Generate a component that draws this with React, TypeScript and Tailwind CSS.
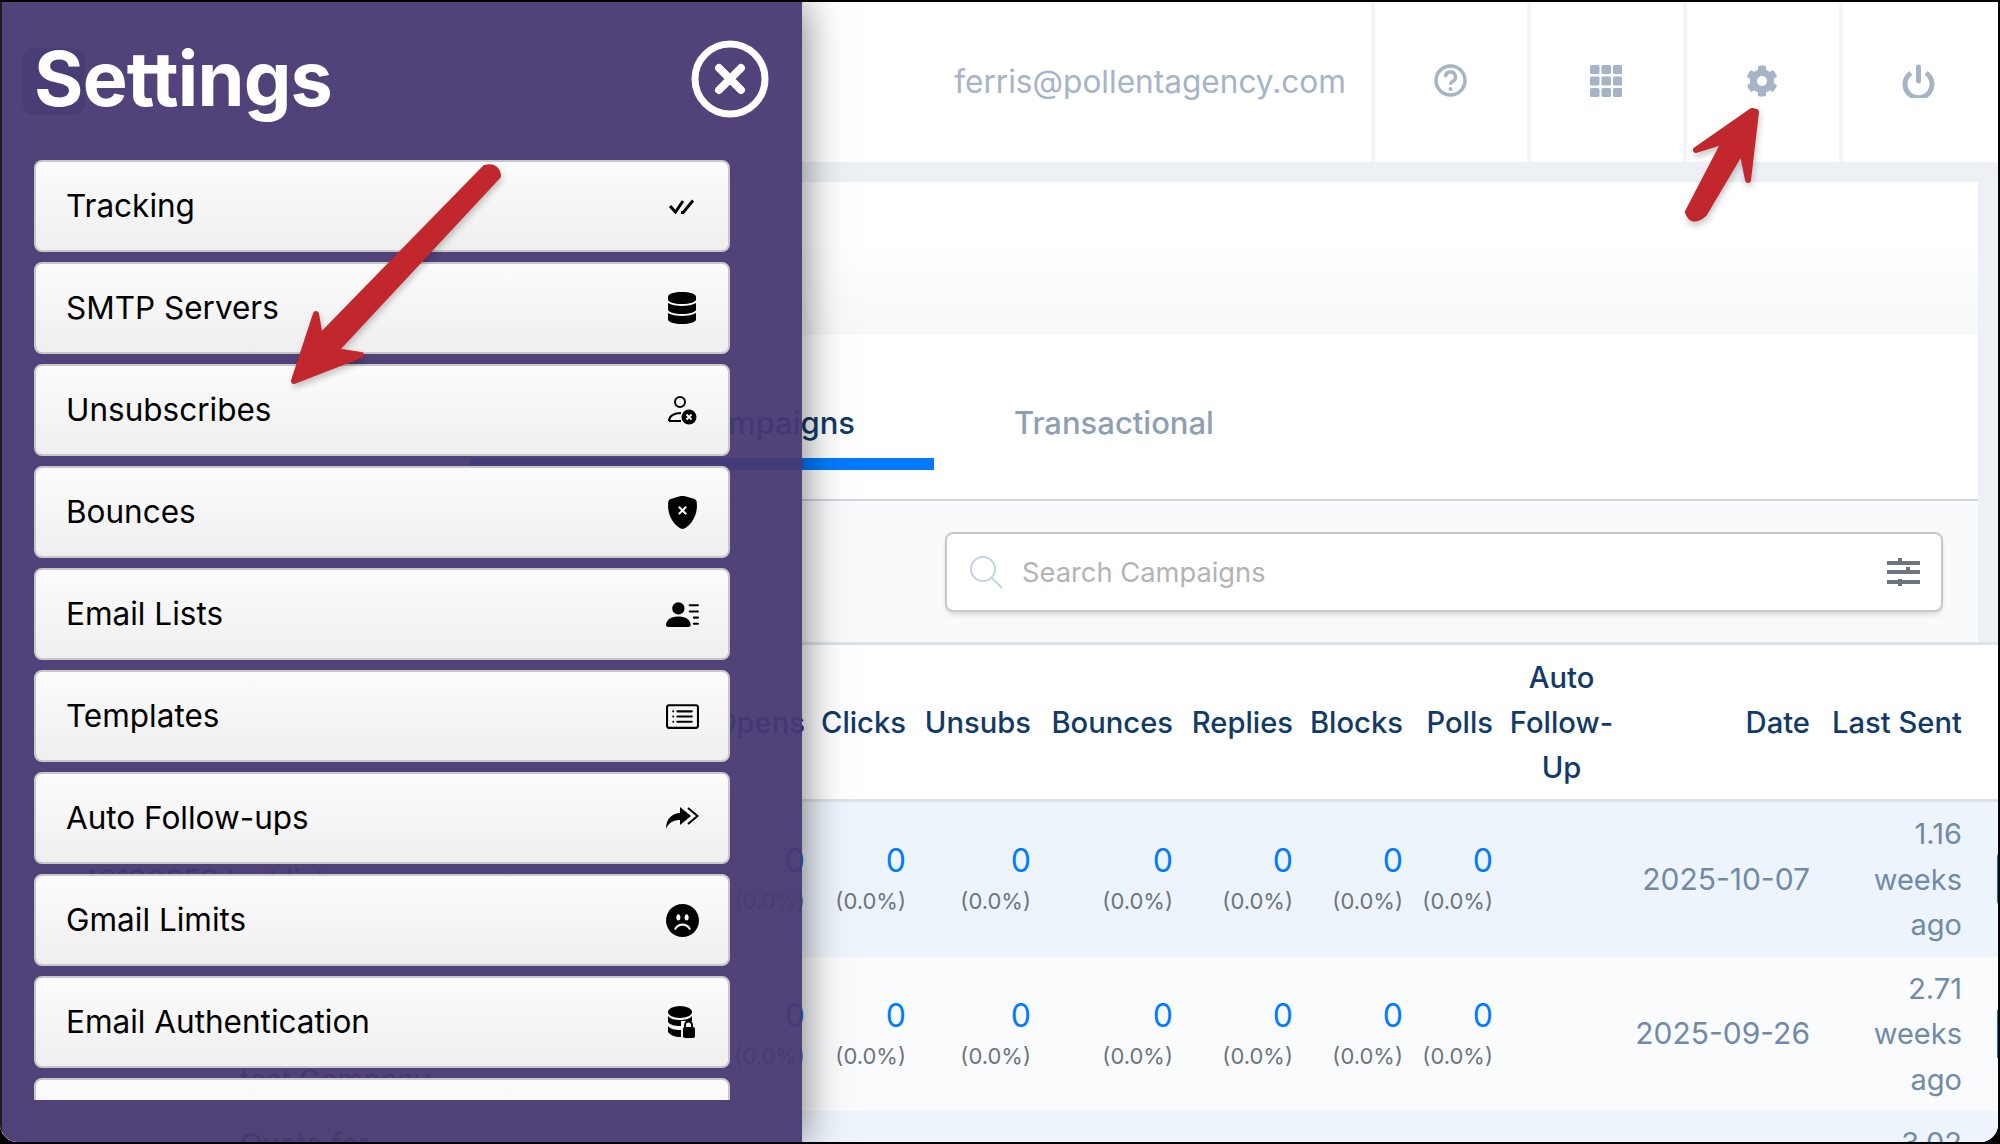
import { BsCardList, BsEmojiFrownFill, BsPersonLinesFill, BsShieldFillX } from "react-icons/bs";
import { FaCog, FaDatabase } from "react-icons/fa";

const font = { fontFamily: "Inter, sans-serif" };

const CheckDouble = () => (
  <svg width="26" height="15" viewBox="0 0 26 15" fill="none" stroke="#000" strokeWidth="3">
    <path d="M1 7l5.500 6L14 2" />
    <path d="M12 13.500l2 .2L24 1.500" />
  </svg>
);

const UserX = () => (
  <svg width="30" height="29" viewBox="0 0 30 29" fill="none">
    <circle cx="13" cy="6" r="5" stroke="#000" strokeWidth="2" />
    <path d="M2 25c0-5 5-8 12-8M2 25h12" stroke="#000" strokeWidth="2" />
    <circle cx="22" cy="21" r="7.500" fill="#000" />
    <path d="M19.500 18.500l5 5M24.500 18.500l-5 5" stroke="#fff" strokeWidth="1.800" />
  </svg>
);

const Forward = () => (
  <svg width="33" height="22" viewBox="0 0 33 22" fill="#000">
    <path d="M0 22C0 11 7 6 14 6V0l11 9-11 9v-5C8 13 3 15 0 22z" />
    <path d="M22 1l9.500 8L22 17" fill="none" stroke="#000" strokeWidth="2" />
  </svg>
);

const DatabaseLock = () => (
  <svg width="28" height="32" viewBox="0 0 28 32" fill="#000">
    <ellipse cx="12" cy="6" rx="12" ry="6" />
    <path d="M0 10c2 3 7 4 12 4s10-1 12-4v6c-2 3-7 4-12 4S2 19 0 16zM0 20c2 3 7 4 12 4s10-1 12-4v6c-2 3-7 5-12 5S2 29 0 26z" />
    <rect x="13" y="15" width="15" height="17" fill="#f4f4f4" />
    <path d="M17 22v-3a3.500 3.500 0 0 1 7 0v3" fill="none" stroke="#000" strokeWidth="2" />
    <rect x="15" y="21" width="12" height="11" rx="2" />
  </svg>
);

const Question = () => (
  <svg width="33" height="33" viewBox="0 0 33 33" fill="none" stroke="#a5b4c6" strokeWidth="3.500">
    <circle cx="16.500" cy="16.500" r="14.500" />
    <path d="M11.500 13a5 5 0 1 1 7.500 4.300c-1.700 1-2.500 1.800-2.500 3.200" />
    <circle cx="16.500" cy="25" r="2" fill="#a5b4c6" stroke="none" />
  </svg>
);

const Grid = () => (
  <svg width="32" height="32" viewBox="0 0 32 32" fill="#a5b4c6">
    {[0, 11.500, 23].flatMap((y) =>
      [0, 11.500, 23].map((x) => <rect key={`${x}-${y}`} x={x} y={y} width="9.500" height="9" rx="1.500" />)
    )}
  </svg>
);

const Power = () => (
  <svg width="33" height="34" viewBox="0 0 33 34" fill="none" stroke="#a5b4c6" strokeWidth="5">
    <path d="M9 9a13.500 13.500 0 1 0 15 0" />
    <path d="M16.500 3v14" strokeLinecap="round" />
  </svg>
);

const SearchIcon = () => (
  <svg width="34" height="34" viewBox="0 0 34 34" fill="none" stroke="#c5d3e3" strokeWidth="2">
    <circle cx="14" cy="14" r="12" />
    <path d="M23 23l10 10" />
  </svg>
);

const SlidersIcon = () => (
  <svg width="33" height="28" viewBox="0 0 33 28" fill="#6c757d">
    <rect y="3" width="33" height="4" />
    <rect y="12" width="33" height="4" />
    <rect y="22" width="33" height="4" />
    <rect x="11" y="0" width="4" height="7" />
    <rect x="19" y="9" width="4" height="7" />
    <rect x="11" y="21" width="4" height="7" />
  </svg>
);

const items = [
  { label: "Tracking", icon: <CheckDouble /> },
  { label: "SMTP Servers", icon: <FaDatabase size={32} /> },
  { label: "Unsubscribes", icon: <UserX /> },
  { label: "Bounces", icon: <BsShieldFillX size={33} /> },
  { label: "Email Lists", icon: <BsPersonLinesFill size={33} /> },
  { label: "Templates", icon: <BsCardList size={33} /> },
  { label: "Auto Follow-ups", icon: <Forward /> },
  { label: "Gmail Limits", icon: <BsEmojiFrownFill size={33} /> },
  { label: "Email Authentication", icon: <DatabaseLock /> },
  { label: "", icon: null },
];

const cols =
  "grid grid-cols-[690px_125px_101px_125px_142px_120px_110px_90px_121px_194px_154px_28px]";
const stats = ["Opens", "Clicks", "Unsubs", "Bounces", "Replies", "Blocks", "Polls"];

const rows = [
  {
    name: ["Campaign", "48100059 test list", "Follow-up"],
    indent: "pl-[80px]",
    date: "2025-10-07",
    sent: ["1.16", "weeks", "ago"],
    bg: "bg-[#edf4fb]",
  },
  {
    name: ["Campaign for", "sales outreach", "test Company"],
    indent: "pl-[240px]",
    date: "2025-09-26",
    sent: ["2.71", "weeks", "ago"],
    bg: "bg-[#f9fbfd]",
  },
  {
    name: ["Quote for"],
    indent: "pl-[240px]",
    date: "2025-09-20",
    sent: ["3.02", "weeks", "ago"],
    bg: "bg-[#edf4fb]",
  },
];

const Dashboard = () => (
  <div className="flex h-full flex-col">
    {/* Top bar */}
    <header className="flex h-[160px] shrink-0 bg-white">
      <div className="ml-[22px] mt-[46px] h-[67px] w-[63px] rounded-xl bg-[#77809a]" />
      <div className="flex flex-1 items-center justify-end pr-[25px] text-[31.600px] text-[#a5b4c6]">
        ferris@pollentagency.com
      </div>
      <div className="flex w-[156px] items-center justify-center border-l-[4px] border-[#f2f6fa] pb-[3px] pr-[2px]">
        <Question />
      </div>
      <div className="flex w-[156px] items-center justify-center border-l-[4px] border-[#f2f6fa] pb-[3px] pr-[2px]">
        <Grid />
      </div>
      <div className="flex w-[156px] items-center justify-center border-l-[4px] border-[#f2f6fa] pb-[3px] pr-[2px] text-[#a5b4c6]">
        <FaCog size={32} />
      </div>
      <div className="flex w-[159px] items-center justify-center border-l-[4px] border-[#f2f6fa] pb-[3px] pr-[5px]">
        <Power />
      </div>
    </header>

    {/* Card */}
    <div className="shrink-0 bg-[#edf1f6] pt-[20px] pr-[20px]">
      <div className="h-[153px] bg-gradient-to-b from-white from-40% to-[#f7f8f8]" />
      <div className="flex h-[166px] items-start border-b-[2px] border-[#cdd5e2] bg-white pl-[470px]">
        <div className="h-[135px] w-[464px] whitespace-nowrap border-b-[12px] border-[#007bff] pr-[79px] pt-[58px] text-right text-[31px] font-medium leading-[60px] text-[#123a66]">
          Automated Campaigns
        </div>
        <div className="ml-[80px] pt-[58px] text-[31px] font-medium leading-[60px] text-[#8f9fb3]">
          Transactional
        </div>
      </div>
      <div className="flex h-[141px] items-center justify-end bg-[#f9fafc] pr-[35px]">
        <div className="flex h-[80px] w-[998px] items-center rounded-lg border-[2px] border-[#c9c9c9] bg-white pl-[22px] pr-[21px] shadow-md">
          <SearchIcon />
          <span className="ml-[19px] flex-1 pt-[3px] text-[27.300px] text-[#b3b3b3]">Search Campaigns</span>
          <SlidersIcon />
        </div>
      </div>
    </div>

    {/* Table runs past the card on the right */}
    <div className="min-h-0 flex-1 overflow-hidden bg-white">
      <div
        className={`${cols} h-[160px] items-center border-t-[3px] border-b-[3px] border-[#dee2e6] text-[29.200px] font-medium leading-[45px] text-[#123a66]`}
      >
        <div />
        {stats.map((s) => (
          <div key={s} className="whitespace-nowrap pr-[10px] text-right">
            {s}
          </div>
        ))}
        <div className="pr-[4px] text-center">
          Auto
          <br />
          Follow-
          <br />
          Up
        </div>
        <div className="pr-[8px] text-right">Date</div>
        <div className="whitespace-nowrap pr-[10px] text-right">Last Sent</div>
      </div>
      {rows.map((row) => (
        <div key={row.date} className={`${cols} ${row.bg} h-[154.500px] items-center overflow-hidden`}>
          <div className={`h-full pt-[10px] text-[29px] leading-[45px] text-[#123a66] ${row.indent}`}>
            {row.name.map((n) => (
              <div key={n}>{n}</div>
            ))}
          </div>
          {stats.map((s) => (
            <div key={s} className="whitespace-nowrap pr-[10px] pt-[2px] text-right">
              <div className="text-[32px] leading-[42px] text-[#007bff]">0</div>
              <div className="text-[22px] leading-[38px] text-[#6c757d]">(0.0%)</div>
            </div>
          ))}
          <div />
          <div className="whitespace-nowrap pr-[8px] text-right text-[30px] text-[#718aa8]">{row.date}</div>
          <div className="pr-[10px] text-right text-[29px] leading-[45.500px] text-[#718aa8]">
            {row.sent.map((t) => (
              <div key={t}>{t}</div>
            ))}
          </div>
          <div className="ml-[25px] h-[52px] w-[40px] rounded bg-[#007bff]" />
        </div>
      ))}
    </div>
  </div>
);

const SettingsPanel = () => (
  <aside className="absolute inset-y-0 left-0 flex w-[802px] flex-col border-l-[2px] border-[#1d1a22] bg-[#483872]/95 shadow-[0_0_40px_rgba(0,0,0,0.55)]">
    <div className="flex h-[158px] shrink-0 items-center justify-between pl-[32px] pr-[33px] pb-[4px]">
      <h1 className="text-[75.500px] font-bold leading-none tracking-[-0.8px] text-white">Settings</h1>
      <svg width="78" height="78" viewBox="0 0 78 78" fill="none" stroke="#fff">
        <circle cx="39" cy="39" r="35" strokeWidth="7" />
        <path d="M28 28l22 22M50 28L28 50" strokeWidth="8" strokeLinecap="round" />
      </svg>
    </div>
    <div className="flex h-[940px] flex-col gap-[10px] overflow-hidden pl-[32px] pr-[72px]">
      {items.map((item, i) => (
        <div
          key={i}
          className="flex h-[92px] shrink-0 items-center justify-between rounded-lg border-[2px] border-[#c8c8c8] bg-gradient-to-b from-[#fcfcfc] to-[#efefef] pl-[30px] pr-[22px] text-[31.500px] text-black"
        >
          <span>{item.label}</span>
          <span className="flex w-[48px] justify-center">{item.icon}</span>
        </div>
      ))}
    </div>
  </aside>
);

const Arrows = () => (
  <svg
    className="pointer-events-none absolute left-0 top-[-2px]"
    width="2000"
    height="1144"
    viewBox="0 0 2000 1144"
    fill="#c1272d"
    stroke="#c1272d"
    strokeWidth="6"
    strokeLinejoin="round"
    style={{ filter: "drop-shadow(1px 4px 3px rgba(0,0,0,0.22))" }}
  >
    <path d="M485 168Q497 165 498 176L335 351L361 355L294 381L316 314L320 337Z" />
    <path d="M1752 111L1696 150L1725 141L1688 212Q1692 224 1704 214L1742 150L1748 180L1756 112Z" />
  </svg>
);

export default function App() {
  return (
    <div className="h-[1144px] w-[2000px] overflow-hidden bg-black py-[2px] pr-[2px]" style={font}>
      <div className="relative h-[1140px] overflow-hidden rounded-b-[18px] bg-white">
        <Dashboard />
        <SettingsPanel />
        <Arrows />
      </div>
    </div>
  );
}
